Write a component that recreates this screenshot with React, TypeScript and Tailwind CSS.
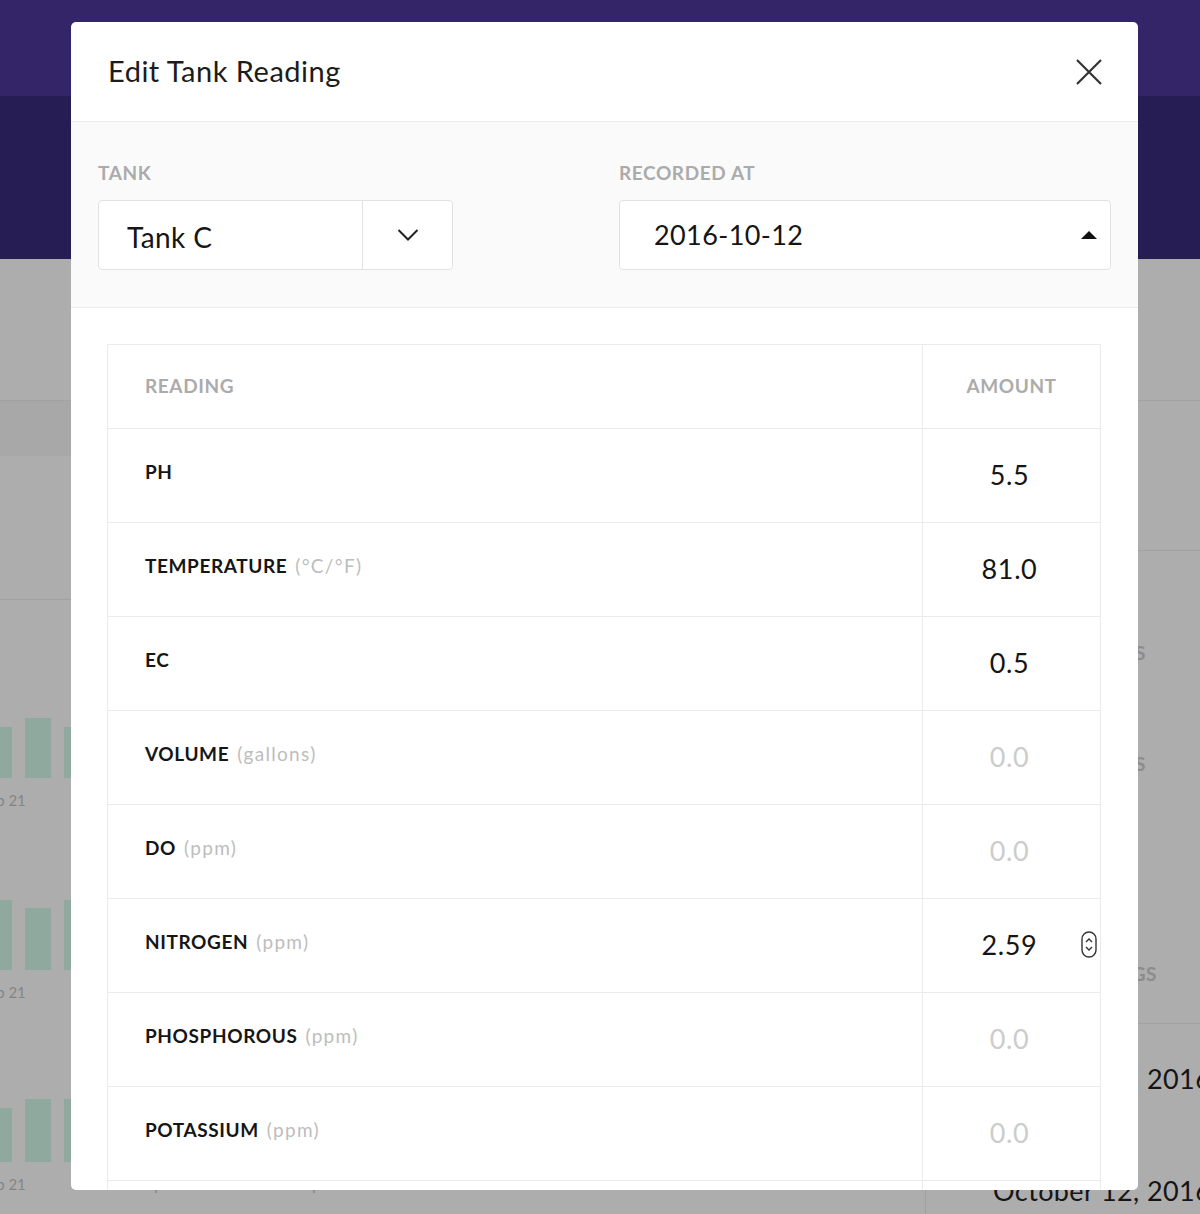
import React from 'react';

type Reading = {
  name: string;
  unit?: string;
  value: string;
  filled: boolean;
  spinner?: boolean;
};

const readings: Reading[] = [
  { name: 'PH', value: '5.5', filled: true },
  { name: 'TEMPERATURE', unit: '(°C/°F)', value: '81.0', filled: true },
  { name: 'EC', value: '0.5', filled: true },
  { name: 'VOLUME', unit: '(gallons)', value: '0.0', filled: false },
  { name: 'DO', unit: '(ppm)', value: '0.0', filled: false },
  { name: 'NITROGEN', unit: '(ppm)', value: '2.59', filled: true, spinner: true },
  { name: 'PHOSPHOROUS', unit: '(ppm)', value: '0.0', filled: false },
  { name: 'POTASSIUM', unit: '(ppm)', value: '0.0', filled: false },
  { name: 'CALCIUM', unit: '(ppm)', value: '0.0', filled: false },
];

const axisLabels = ['Sep 21', 'Sep 25', 'Sep 29', 'Oct 03', 'Oct 07', 'Oct 11'];

// bar heights per chart (px), only the first three show beside the modal
const charts = [
  [51, 60, 51, 44, 58, 50, 40],
  [70, 62, 70, 55, 48, 60, 52],
  [54, 63, 63, 50, 44, 58, 61],
];

const Chart = ({ bars }: { bars: number[] }) => (
  <div className="flex flex-col h-[192px]">
    <div className="h-[160px] flex items-end gap-[13px] ml-[-14px]">
      {bars.map((h, i) => (
        <div key={i} className="w-[26px] shrink-0 bg-[#8fa99f]" style={{ height: h }} />
      ))}
    </div>
    <div className="h-[32px] flex pt-[12px] ml-[-76px] text-[15px] leading-[20px] text-[#858585]">
      {axisLabels.map((l) => (
        <div key={l} className="w-[158px] shrink-0 text-center">
          {l}
        </div>
      ))}
    </div>
  </div>
);

const Background = () => (
  <div className="flex flex-col h-full">
    <div className="h-[96px] bg-[#332567] shrink-0" />
    <div className="h-[163px] bg-[#271d55] shrink-0" />
    <div className="flex flex-1 bg-[#adadad]">
      <div className="w-[925px] shrink-0 flex flex-col">
        <div className="h-[142px] border-b border-[#a2a2a2]" />
        <div className="h-[55px] bg-[#a8a8a8]" />
        <div className="h-[144px] border-b border-[#a2a2a2]" />
        <div className="pt-[18px] flex flex-col">
          {charts.map((c, i) => (
            <Chart key={i} bars={c} />
          ))}
        </div>
      </div>
      <div className="flex-1 min-w-0 overflow-hidden border-l border-[#a0a0a0] flex flex-col">
        <div className="h-[142px] border-b border-[#a2a2a2]" />
        <div className="h-[150px] border-b border-[#a2a2a2]" />
        <div className="h-[472px] flex flex-col font-bold text-[19px] text-[#8c8c8c] tracking-[0.5px]">
          <div className="mt-[88px] text-right pr-[54px]">TANKS</div>
          <div className="mt-[82px] text-right pr-[54px]">UNITS</div>
          <div className="mt-[182px] text-right pr-[43px]">READINGS</div>
        </div>
        <div className="border-t border-[#a2a2a2] pl-[67px] text-[27px] leading-[36px] text-[#151515] tracking-[0.4px] whitespace-nowrap">
          <div className="mt-[37px]">October 12, 2016</div>
          <div className="mt-[76px]">October 12, 2016</div>
        </div>
      </div>
    </div>
  </div>
);

const Chevron = () => (
  <svg width="22" height="14" viewBox="0 0 22 14" fill="none">
    <path d="M1.5 2 L11 11.5 L20.5 2" stroke="#222" strokeWidth="2" />
  </svg>
);

const Spinner = () => (
  <svg width="16" height="27" viewBox="0 0 16 27" fill="none">
    <rect x="1" y="1" width="14" height="25" rx="7" stroke="#333" strokeWidth="1.4" />
    <path d="M5 11 L8 8 L11 11" stroke="#333" strokeWidth="1.4" />
    <path d="M5 16 L8 19 L11 16" stroke="#333" strokeWidth="1.4" />
  </svg>
);

const Modal = () => (
  <div className="absolute left-[71px] top-[22px] w-[1067px] h-[1168px] bg-white rounded-[5px] overflow-hidden flex flex-col">
    <div className="h-[100px] shrink-0 border-b border-[#ececec] flex items-center justify-between pl-[37px] pr-[36px]">
      <h2 className="text-[29px] text-[#1c1c1c] tracking-[0.5px] mt-[-2px]">Edit Tank Reading</h2>
      <svg width="26" height="26" viewBox="0 0 26 26" fill="none">
        <path d="M1 1 L25 25 M25 1 L1 25" stroke="#333" strokeWidth="2.2" />
      </svg>
    </div>

    <div className="h-[186px] shrink-0 bg-[#fafafa] border-b border-[#ebebeb] flex pl-[27px] pr-[27px] pt-[39px]">
      <div className="w-[355px] flex flex-col">
        <label className="text-[19px] leading-[24px] font-bold text-[#ababab] tracking-[0.6px]">TANK</label>
        <div className="mt-[15px] h-[70px] bg-white border border-[#e2e2e2] rounded-[4px] flex">
          <div className="flex-1 flex items-center pl-[28px] text-[28px] text-[#151515] tracking-[0.4px] pt-[4px]">Tank C</div>
          <div className="w-[90px] border-l border-[#e2e2e2] flex items-center justify-center">
            <Chevron />
          </div>
        </div>
      </div>
      <div className="ml-[166px] flex-1 flex flex-col">
        <label className="text-[19px] leading-[24px] font-bold text-[#ababab] tracking-[0.6px]">RECORDED AT</label>
        <div className="mt-[15px] h-[70px] bg-white border border-[#e2e2e2] rounded-[4px] flex items-center justify-between pl-[34px] pr-[13px]">
          <span className="text-[27px] text-[#151515] tracking-[0.4px]">2016-10-12</span>
          <svg width="16" height="8" viewBox="0 0 16 8">
            <path d="M0 8 L8 0 L16 8 Z" fill="#111" />
          </svg>
        </div>
      </div>
    </div>

    <div className="pt-[36px] pl-[36px] pr-[37px]">
      <div className="border border-[#ebebeb] grid grid-cols-[1fr_178px]">
        <div className="h-[84px] border-b border-[#ebebeb] flex items-center pl-[37px] text-[19px] font-bold text-[#ababab] tracking-[0.6px]">
          READING
        </div>
        <div className="h-[84px] border-b border-l border-[#ebebeb] flex items-center justify-center text-[19px] font-bold text-[#ababab] tracking-[0.6px]">
          AMOUNT
        </div>
        {readings.map((r) => (
          <React.Fragment key={r.name}>
            <div className="h-[94px] border-b border-[#ebebeb] flex items-center pl-[37px] pb-[6px] text-[19px]">
              <span className="font-bold text-[#161616] tracking-[0.6px]">{r.name}</span>
              {r.unit && <span className="ml-[8px] text-[#bdbdbd] tracking-[1.3px]">{r.unit}</span>}
            </div>
            <div className="h-[94px] border-b border-l border-[#ebebeb] relative flex items-center justify-center">
              <span className={r.filled ? 'text-[27px] text-[#151515] tracking-[0.6px] ml-[-4px]' : 'text-[27px] text-[#cccccc] tracking-[0.6px] ml-[-4px]'}>
                {r.value}
              </span>
              {r.spinner && (
                <div className="absolute right-[3px] top-[32px]">
                  <Spinner />
                </div>
              )}
            </div>
          </React.Fragment>
        ))}
      </div>
    </div>
  </div>
);

export default function App() {
  return (
    <div
      className="relative w-[1200px] h-[1214px] overflow-hidden"
      style={{ fontFamily: 'Lato, "Open Sans", sans-serif' }}
    >
      <Background />
      <Modal />
    </div>
  );
}
